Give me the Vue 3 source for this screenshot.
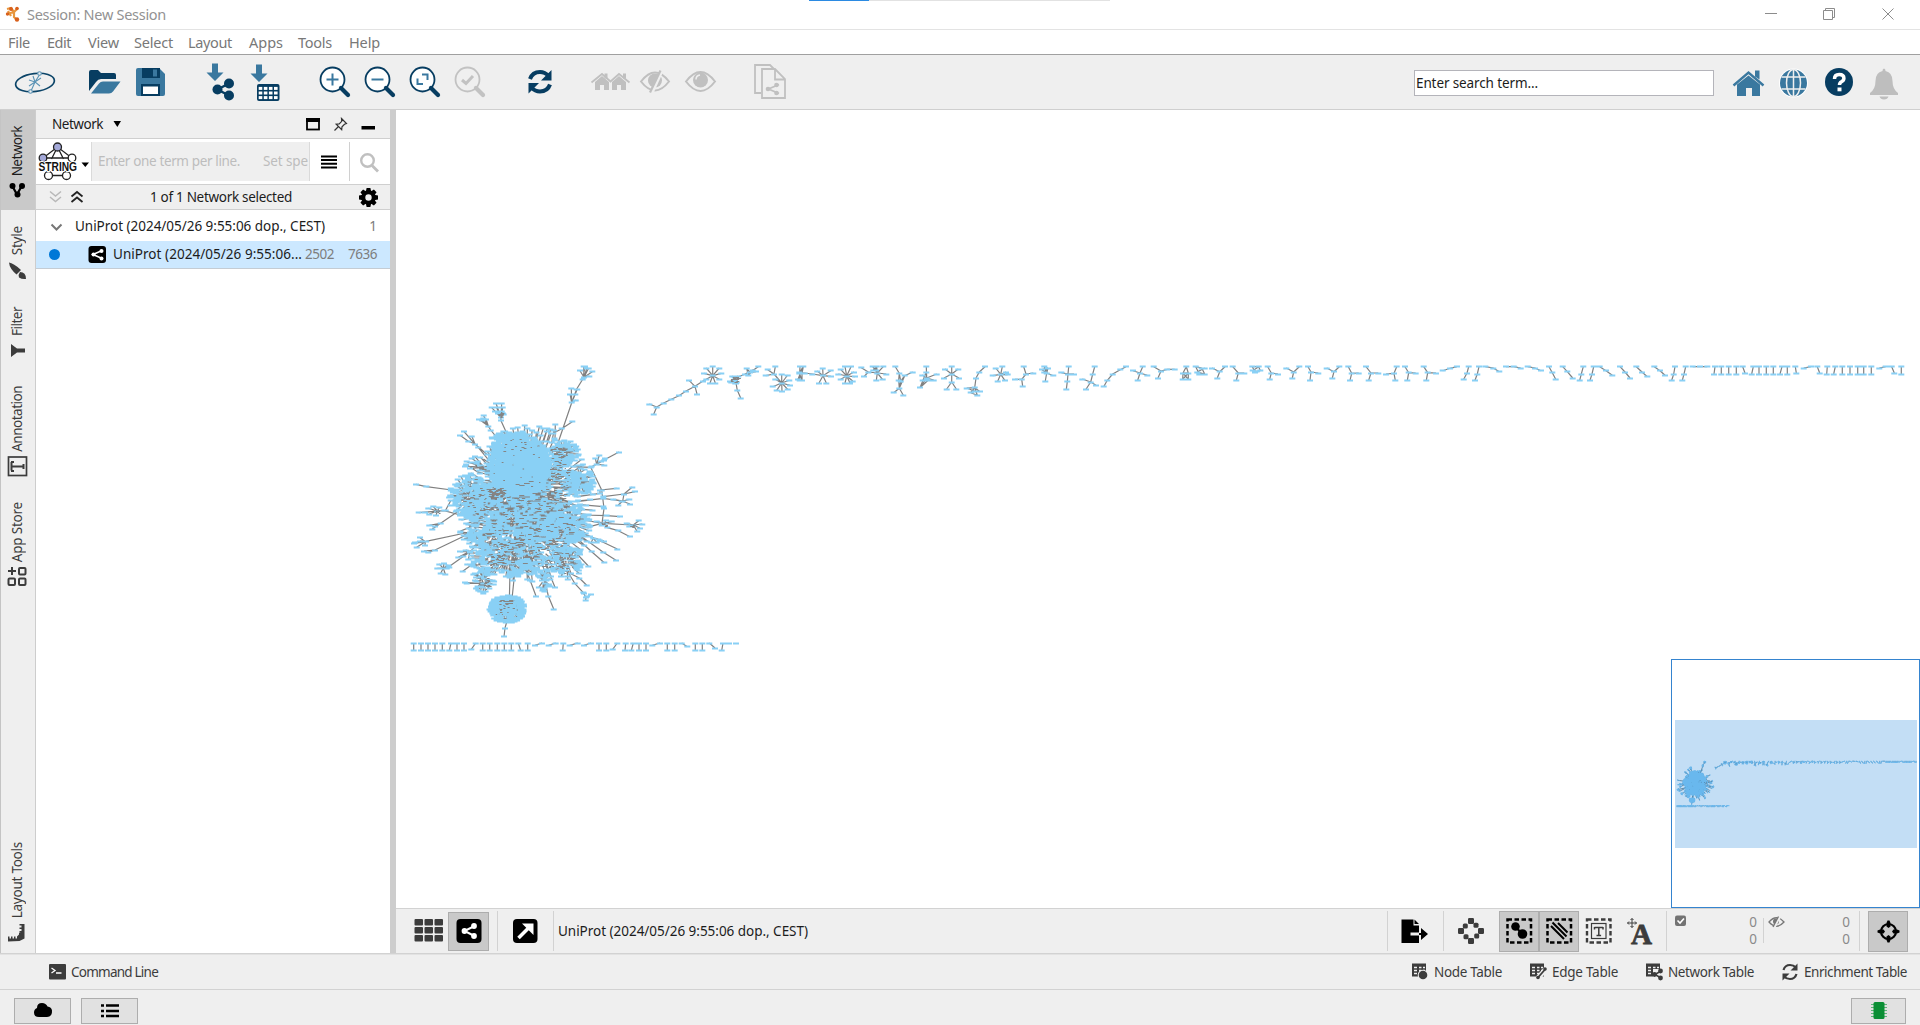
<script setup>
import { h } from 'vue'

/* Icon cell: b = [x, y, width, height] of the part of the window it draws */
const Cell = (p, { slots }) =>
  h('svg', { width: p.b[2], height: p.b[3], viewBox: p.b.join(' '), fill: 'none' }, slots.default())
Cell.props = ['b']

/* Spreads the letters of a label over the given length */
const vFit = {
  mounted(el, { value, arg }) {
    const len = arg === 'v' ? el.offsetHeight : el.getBoundingClientRect().width
    el.style.letterSpacing = ((value - len) / el.textContent.length).toFixed(3) + 'px'
  },
}

const menus = [['File', 22, 8], ['Edit', 24, 17], ['View', 31, 17], ['Select', 39, 15], ['Layout', 44, 15], ['Apps', 34, 17], ['Tools', 34, 15], ['Help', 31, 17]]
const tables = [['node', 'Node Table', 68], ['edge', 'Edge Table', 66], ['net', 'Network Table', 86], ['ref', 'Enrichment Table', 103]]

/* ---- network drawing ---- */
const edges = []
const nodes = []
const parse = (s) => s.trim().split(/\s+/).map((q) => q.split(',').map(Number))
function draw(text, ox, oy) {
  text.trim().split('\n').forEach((line) => {
    const t = line.trim()
    const pts = parse(t.slice(1)).map(([x, y]) => [ox + x / 3, oy + y / 3])
    if (t[0] === 'P') edges.push(...pts.slice(1).map((q, i) => [...pts[i], ...q]))
    else edges.push(...pts.slice(1).map((q) => [...pts[0], ...q]))
    nodes.push(...pts)
  })
}
function bars(list, ox, oy, top, bottom) {
  list.trim().split(' ').forEach((s) => {
    const [a, b] = s.split('/').map(Number)
    draw(`P ${a},${top} ${b || a},${bottom}`, ox, oy)
  })
}

draw(`P 58,162 80,171 101,159 124,148 147,137 168,123 195,109 219,93 248,77
S 80,171 71,193
S 195,109 177,91 201,132
S 248,77 229,54 248,50 268,54 222,70 274,70 229,88 268,88 240,99 256,99
S 314,90 307,78 325,78 300,95 316,99
P 307,78 320,97 325,78 304,97 314,82 318,99 322,121 332,144
P 360,67 385,50
S 360,67 368,60 350,55 345,72 378,65 355,77 325,80
P 350,55 355,77 368,60 345,72
S 432,72 413,59 436,50 407,77 455,99
S 455,99 455,73 473,75 436,88 478,91 428,110 480,106 440,121 456,125 473,118
P 510,50 509,70 509,90
P 520,50 516,70 516,90 508,70 519,50 504,88
P 508,68 524,69 547,72 579,77
S 579,77 578,54 602,62 562,63 603,79 567,99 589,99
S 650,78 645,50 663,50 632,58 672,66 625,72 675,80 632,88 668,93 645,99 660,99
S 742,69 728,50 740,50 760,50 769,72 758,89 739,92 715,66
P 728,50 738,60 740,50 730,60
S 715,66 694,53 702,80
P 796,50 808,70 812,93 808,115 820,136
P 848,66 824,77 812,93
P 808,70 806,90 808,115 791,128
P 824,77 808,115
S 890,84 889,50 889,66 877,75 920,72 911,90 878,90 870,113
P 889,66 870,113 895,90
S 965,72 965,50 945,57 985,57 942,84 987,84 965,96
S 965,96 950,117 979,117
P 1065,50 1048,66 1038,84 1034,113 1042,136
S 1034,113 1010,114 1050,125 1022,128
P 1010,114 1034,124 1022,128 1042,136
S 1112,73 1117,50 1097,54 1128,66 1088,77 1133,74 1103,94 1125,92
S 1188,72 1181,50 1210,69 1175,88
S 1175,88 1155,88 1178,109
S 1250,69 1236,59 1243,50 1254,54 1270,77 1246,93
P 1236,59 1254,54 1243,66
S 1314,72 1316,50 1294,68 1332,72 1312,95
P 1312,95 1309,118`, 630, 350)
draw(`S 32,96 7,87 48,106 18,118 38,72
P 38,72 44,50
P 138,50 121,59 98,72 82,91 71,110
S 180,69 188,50 159,62 202,76 173,91
S 243,63 221,50 262,58 234,84
P 262,58 284,58
P 319,50 309,69 325,69 319,50
P 325,69 308,88 309,69 325,88 325,69
P 347,50 365,54 374,72 358,72 347,50
P 374,54 352,66 374,72
S 419,65 396,54 435,50 412,84
S 475,69 458,50 493,69 469,91
P 517,50 536,50 541,62 525,66 517,50
P 536,50 518,62 530,64
S 574,69 563,50 594,72 569,88
S 641,66 619,54 658,50 637,84
S 693,66 684,50 715,69 690,91
S 762,65 740,54 778,50 757,84
S 815,70 805,50 836,69 810,91
S 873,69 858,50 895,69 866,91
S 942,70 950,50 918,72 946,91
S 986,68 975,50 1007,69 982,91
S 1043,68 1031,50 1068,69 1039,91
P 1088,62 1110,55 1131,50
P 1166,50 1161,69 1151,88
P 1197,50 1192,72 1185,91
P 1216,50 1240,54 1258,65`, 1080, 350)
draw(`P 18,50 41,50 62,54
P 83,50 105,54 123,62
P 147,50 157,68 167,88
P 188,50 202,65 218,84
P 250,50 244,72 239,91
P 281,50 276,72 270,91
P 299,50 318,62 337,76
P 360,50 375,66 390,84
P 409,50 426,66 442,80
P 463,50 480,62 495,76
P 525,50 521,72 515,91
P 557,50 552,72 547,91
P 578,50 600,50 622,50
P 728,50 735,69
P 886,50 889,69
P 911,54 933,50
P 952,50 959,69
P 1138,54 1157,50
P 1175,50 1183,69`, 1500, 350)
bars('645/642 664 686 709 760/755 777 799 820 846/840 862 982/980 1006/1001 1027 1050 1073 1091 1114 1204', 1500, 350, 50, 72)
bars('41 63 84 105 127 153/148 171 192 248 269 292 313 334 355/362 383 490/488 597 619 677/675 700/694 717 738 802 824 886 907 969/965', 400, 620, 69, 92)
draw(`P 214,88 227,69
P 405,76 426,69
P 446,76 467,69
P 509,76 533,69
P 552,76 573,69
P 638,88 652,69
P 757,76 780,69
P 845,69 862,80
P 928,69 945,84
P 987,69
P 1008,69
P 322,0 315,24 312,50`, 400, 620)
draw(`P 470,290 515,158 530,117 548,88 555,50
S 552,82 540,62 560,55 577,65 551,50 566,54 568,78 548,88
S 515,158 527,150 510,132 526,132 514,115 532,117
P 325,260 303,212 302,185
S 303,203 288,160 305,160 275,173 290,173 308,173 285,184 305,185 297,188 309,190
P 303,203 294,190 311,192 303,203
P 300,275 272,240 250,205
S 265,228 251,197 237,208 258,207 247,212
P 262,314 225,282 192,245
P 225,282 205,274 180,256
P 225,282 215,258
P 460,250 485,236 517,215
P 465,270 466,223
P 372,260 374,226
P 408,275 418,230
P 418,275 430,234
P 428,275 442,236
P 440,275 452,238
P 455,278 462,242
P 155,420 79,410 48,403
S 112,483 85,475 100,470 118,473 56,488 88,492 133,482 108,497 75,487
P 133,482 180,495
P 137,480 152,452
P 180,480 122,520 97,537
P 122,520 88,526
P 122,520 105,528
P 210,546 78,574 45,578
S 76,575 60,563 42,580 50,592 75,586 60,573
P 210,550 105,600 72,603
P 105,600 85,607
P 262,605 235,630 188,664
P 235,580 210,605 140,655
S 210,604 180,605 175,622 190,618 205,628 222,602 197,600
S 130,655 118,642 132,640 112,655 148,653 122,670 136,672 145,645
P 520,350 572,352 612,330 657,306
S 590,343 598,315 615,325 603,335 613,345 575,350 586,325
P 572,352 605,420 612,475 606,520
P 530,440 600,430 600,420 650,415
P 530,455 610,445 665,453 690,462
S 668,453 672,432 655,465 688,448 640,448
P 610,440 672,432 697,411
P 672,432 705,425
P 540,464 610,470
P 550,495 620,497 660,500
P 550,510 610,520 695,525
S 700,525 716,512 727,522 720,535 712,545 680,520 688,528
S 614,520 590,515 635,515 622,533 605,525 618,510
P 622,533 655,542 690,560
P 540,520 570,530 605,520
P 540,545 600,572 652,597
P 530,550 610,607 648,631
P 520,555 575,605 613,638
S 580,565 570,560 595,567 573,578 590,577 612,573
P 520,600 565,648
P 490,660 538,684 560,706
P 500,660 524,700 552,730
S 558,743 550,728 573,733 557,750 561,738
P 370,640 390,690 408,738
P 430,670 445,738 461,777
P 435,640 465,712
P 345,660 335,755
P 330,665 328,755
S 252,352 215,325 225,320 200,335 195,348 210,355 230,340 240,345 238,360
S 250,700 200,700 235,720 250,730 268,715 243,680 195,698 225,690`, 400, 350)

/* dense parts: seeded noise keeps the layout identical on every load */
let seed = 20240526
const rnd = () => {
  seed = (Math.imul(seed, 1664525) + 1013904223) >>> 0
  return seed / 4294967296
}
function blob(cx, cy, rx, ry, count, spoke) {
  for (let i = 0; i < count; i++) {
    const a = rnd() * Math.PI * 2
    const r = Math.sqrt(rnd())
    const x = 400 + (cx + Math.cos(a) * rx * r) / 3
    const y = 350 + (cy + Math.sin(a) * ry * r) / 3
    nodes.push([x, y])
    if (rnd() < spoke) {
      const tx = 400 + cx / 3
      const ty = 350 + cy / 3
      const k = Math.min(0.7, 10 / (Math.hypot(tx - x, ty - y) + 1))
      edges.push([x, y, x + (tx - x) * k, y + (ty - y) * k])
    }
  }
}
/* long edges inside the hub, drawn below the nodes */
for (let i = 0; i < 200; i++) {
  const a = rnd() * 6.283
  const r = 0.5 + rnd() * 0.45
  edges.push([521, 485, 400 + (370 + Math.cos(a) * 185 * r) / 3, 350 + (465 + Math.sin(a) * 215 * r) / 3])
}
blob(358, 345, 90, 98, 1250, 0.2)
blob(385, 440, 155, 145, 520, 0.7)
blob(370, 550, 170, 105, 300, 0.9)
blob(350, 490, 145, 105, 240, 0.3)
blob(210, 440, 63, 68, 180, 0.7)
blob(492, 310, 45, 44, 75, 0.8)
blob(535, 392, 48, 46, 85, 0.8)
blob(505, 520, 64, 60, 95, 0.9)
blob(500, 635, 50, 54, 70, 1)
blob(325, 620, 118, 66, 115, 1)
blob(432, 690, 24, 36, 26, 1)
blob(250, 690, 34, 38, 34, 1)
blob(232, 648, 38, 24, 16, 1)
blob(375, 655, 38, 27, 30, 1)
blob(330, 282, 64, 40, 110, 0.6)
blob(235, 550, 55, 30, 34, 1)
blob(322, 777, 50, 41, 235, 0.4)
for (let i = 0; i < 34; i++) {
  const a = (i / 34) * 6.283
  draw(`P 322,777 ${322 + Math.cos(a) * (48 + rnd() * 6)},${777 + Math.sin(a) * (38 + rnd() * 6)}`, 400, 350)
}
/* loose nodes that fray the outline of the hub */
for (let i = 0; i < 90; i++) {
  const a = (i / 90) * 6.283
  const r = 0.97 + rnd() * 0.17
  draw(`P ${375 + Math.cos(a) * 160},${465 + Math.sin(a) * 178} ${375 + Math.cos(a) * 185 * r},${465 + Math.sin(a) * 205 * r}`, 400, 350)
}
/* short edge fragments that stay visible between packed nodes */
const specks = []
function speck(cx, cy, rx, ry, count, len) {
  for (let i = 0; i < count; i++) {
    const a = rnd() * 6.283
    const r = Math.sqrt(rnd())
    const x = 400 + (cx + Math.cos(a) * rx * r) / 3
    const y = Math.round(350 + (cy + Math.sin(a) * ry * r) / 3) + 0.5
    specks.push(`M${x.toFixed(1)} ${y}h${(1 + rnd() * len).toFixed(1)}`)
  }
}
speck(375, 500, 150, 110, 140, 5)
speck(360, 360, 85, 85, 8, 1)
speck(240, 440, 55, 60, 40, 3)
speck(283, 422, 26, 12, 34, 4)
speck(475, 385, 32, 55, 46, 4)
speck(475, 312, 28, 26, 26, 4)
speck(400, 610, 125, 50, 70, 4)
speck(285, 630, 28, 22, 28, 3)
speck(262, 700, 12, 18, 14, 2)
speck(495, 640, 26, 28, 22, 3)
speck(340, 290, 40, 30, 14, 2)
speck(318, 755, 26, 7, 16, 4)
speck(322, 785, 42, 28, 16, 2)
speck(302, 196, 8, 9, 14, 2)
speck(112, 484, 6, 8, 8, 1)
speck(245, 352, 10, 8, 12, 2)
speck(612, 522, 8, 8, 10, 2)
speck(696, 526, 6, 6, 6, 2)
speck(1003, 88, 12, 9, 22, 3)
const edgePath = edges.map((e) => `M${e[0].toFixed(1)} ${e[1].toFixed(1)}L${e[2].toFixed(1)} ${e[3].toFixed(1)}`).join('')
const nodePath = nodes.map(([x, y]) => `M${(x - 3).toFixed(1)} ${(Math.round(y - 0.5) + 0.5).toFixed(1)}h6`).join('')
const speckPath = specks.join('')
const grid = [0, 1, 2, 3, 4, 5, 6, 7, 8]
const ring = (n) => Array.from({ length: n }, (_, i) => (i * 360) / n)
</script>

<template>
  <div class="window">
    <header class="title">
      <Cell :b="[0, 0, 27, 29]">
        <path d="M7 9l4-1 3 4 4-4M7 14l7-2v5l3 3M8 11l3 5" stroke="#e8963c" stroke-width="2.2" />
        <g fill="#d8601c"><circle cx="11" cy="9" r="2" /><circle cx="17" cy="8.500" r="1.800" /><circle cx="17" cy="19.500" r="2.200" /><circle cx="7.500" cy="14" r="1.700" /></g>
      </Cell>
      <span v-fit="139" class="t-title">Session: New Session</span>
      <i class="loading"><b></b></i>
      <Cell :b="[1755, 0, 165, 29]" class="push">
        <g stroke="#8c8c8c"><path d="M1765 13.500h12M1823.500 10.500h9v9h-9zM1825.500 10v-1.500h9v9h-2M1882.500 8.500l11 11M1893.500 8.500l-11 11" /></g>
      </Cell>
    </header>

    <nav class="menu">
      <div v-for="m in menus" :key="m[0]" class="m" :style="{ paddingLeft: m[2] + 'px', width: m[1] + m[2] + 'px' }"><span v-fit="m[1]">{{ m[0] }}</span></div>
    </nav>

    <div class="tools">
      <Cell :b="[0, 55, 80, 54]">
        <g stroke="#0b4468" stroke-width="1.700"><ellipse cx="35" cy="82.500" rx="19.500" ry="9" transform="rotate(-7 35 82.500)" /></g>
        <g stroke="#5a93b5" stroke-width="1.100"><path d="M31 91l4-9 5-8M29 80l6 2 6-4M33 76l2 6 5 4M35 82l-6 4" /><circle cx="30.500" cy="91.500" r="1.800" fill="#efefef" /><circle cx="39.500" cy="73.500" r="1.800" fill="#efefef" /></g>
      </Cell>
      <Cell :b="[80, 55, 48, 54]">
        <path d="M89 91V72q0-2 2-2h7l3 3h13q2 0 2 2v4h-15q-3 0-5 3z" fill="#073d61" />
        <path d="M91 93.500l8-10q1.500-2 4-2h17.500l-7.500 10q-1.500 2-4 2z" fill="#3a789f" />
      </Cell>
      <Cell :b="[128, 55, 62, 54]">
        <path d="M136 70q0-2 2-2h21l6 6v20q0 2-2 2h-25q-2 0-2-2z" fill="#3a789f" />
        <path d="M142 68h18v10h-18zM141 84h19v12h-19z" fill="#073d61" /><path d="M153 69.500h4v7h-4z" fill="#3a789f" /><path d="M143 86.500h15v7.500h-15z" fill="#fff" />
      </Cell>
      <Cell :b="[190, 55, 55, 54]">
        <path d="M212 63.500h6v9h5.500l-8.500 8.500-8.500-8.500h5.500z" fill="#3a789f" />
        <path d="M229 83.500l-11.500 6 11.500 6" stroke="#073d61" stroke-width="2.500" /><g fill="#073d61"><circle cx="217.500" cy="89.500" r="5" /><circle cx="229" cy="83.500" r="5" /><circle cx="229" cy="95.500" r="5" /></g>
      </Cell>
      <Cell :b="[245, 55, 65, 54]">
        <path d="M256 64.500h6v9h5.500L259 82l-8.500-8.500h5.500z" fill="#3a789f" />
        <rect x="257" y="84" width="22.500" height="17" rx="2" fill="#073d61" />
        <g fill="#fff"><template v-for="c in 4" :key="c"><rect v-for="r in 3" :key="r" :x="253.600 + c * 5.100" :y="82.300 + r * 4.600" width="3.600" height="3" /></template></g>
      </Cell>
      <Cell v-for="k in 4" :key="k" :b="[310 + (k - 1) * 45, 55, 45, 54]">
        <g :transform="`translate(${(k - 1) * 45})`">
          <g :stroke="k === 4 ? '#c2c2c2' : '#073d61'"><circle cx="332.500" cy="79.500" r="12" stroke-width="1.800" :fill="k === 4 ? '#efefef' : '#fff'" /><path d="M341 88l7 7" stroke-width="4.200" stroke-linecap="round" /></g>
          <path v-if="k === 1" d="M326.500 79.500h12M332.500 73.500v12" stroke="#3a789f" stroke-width="2" />
          <path v-if="k === 2" d="M326.500 79.500h12" stroke="#3a789f" stroke-width="2" />
          <path v-if="k === 3" d="M332 74.500h5.500v5.500M327.500 78.500v5.500h5.500" stroke="#3a789f" stroke-width="2" />
          <path v-if="k === 4" d="M327 80l4 3.500 7-7.500" stroke="#c2c2c2" stroke-width="3" />
        </g>
      </Cell>
      <Cell :b="[490, 55, 90, 54]">
        <g stroke="#073d61" stroke-width="4"><path d="M530 79q2.500-7 10-7 5 0 8.500 4M550 84.500q-2.500 7-10 7-5 0-8.500-4" /></g><path d="M551.500 70v10.500h-10.500zM528.500 93.500V83h10.500z" fill="#073d61" />
      </Cell>
      <Cell :b="[580, 55, 55, 54]">
        <g fill="#c0c0c0"><path d="M595 82l7-6 7 6v8h-5v-5h-4v5h-5zM612 82l7-6 7 6v8h-5v-5h-4v5h-5z" /><path d="M604.500 73.500h3v5h-3zM623 73.500h3v5h-3z" /></g>
        <path d="M591.500 82.500l10.500-8.500 8.500 7.500 8.500-7.500 10.500 8.500" stroke="#c0c0c0" stroke-width="1.800" />
      </Cell>
      <Cell :b="[635, 55, 45, 54]">
        <path d="M641 81.500q14-18 28 0-14 18-28 0z" stroke="#c0c0c0" stroke-width="2" /><circle cx="655" cy="80.500" r="7" fill="#c0c0c0" /><path d="M662 71l-10 22" stroke="#efefef" stroke-width="3" /><path d="M660.500 70.500l-10.500 22" stroke="#c0c0c0" stroke-width="2.200" />
      </Cell>
      <Cell :b="[680, 55, 60, 54]">
        <path d="M686 81.500q14.500-19 29 0-14.500 19-29 0z" stroke="#c0c0c0" stroke-width="2" /><circle cx="700.500" cy="80" r="7.500" fill="#c0c0c0" /><path d="M696 79.500q0-4 4-4.500" stroke="#efefef" stroke-width="1.500" />
      </Cell>
      <Cell :b="[740, 55, 60, 54]">
        <g stroke="#c0c0c0" stroke-width="1.800"><path d="M761 93h-6V65h15l4 4M762 69h13l10 10v19h-23zM775 69v10.500h10M779 84.500l-10.500 4.500 10.500 4.500" /></g><g fill="#c0c0c0"><circle cx="776.500" cy="85" r="2.300" /><circle cx="768" cy="89" r="2.300" /><circle cx="776.500" cy="93" r="2.300" /></g>
      </Cell>
      <div class="find"><span v-fit="122">Enter search term...</span></div>
      <Cell :b="[1715, 55, 57, 54]">
        <path d="M1737 84.500l11.500-9 11.500 9V96h-8v-8h-6v8h-9zM1755 70.500h4.500v9l-4.500-3z" fill="#3a789f" /><path d="M1733.500 85.500l15-13 15 13" stroke="#3a789f" stroke-width="2.400" />
      </Cell>
      <Cell :b="[1772, 55, 44, 54]">
        <circle cx="1793.500" cy="83" r="14.500" fill="#fff" /><circle cx="1793.500" cy="83" r="13.500" fill="#3a789f" /><g stroke="#efefef" stroke-width="1.500"><ellipse cx="1793.500" cy="83" rx="7" ry="13.500" /><path d="M1793.500 69v28M1781.500 77h24M1781.500 89h24" /></g>
      </Cell>
      <Cell :b="[1816, 55, 45, 54]">
        <circle cx="1839" cy="82" r="14" fill="#073d61" /><path d="M1834.500 79q0-4.500 4.700-4.500t4.700 3.800q0 2.200-2.400 3.400-2 1-2 3.300" stroke="#fff" stroke-width="3.500" /><path d="M1837.500 87.500h4v3.800h-4z" fill="#fff" />
      </Cell>
      <Cell :b="[1861, 55, 59, 54]">
        <path d="M1884 68.500q1.500 0 1.500 2.500 7 1.500 7 10 0 8 5.500 12v2h-28v-2q5.500-4 5.500-12 0-8.500 7-10 0-2.500 1.500-2.500zM1879.500 96.500h9q-1 3-4.500 3t-4.500-3z" fill="#bebebe" />
      </Cell>
    </div>

    <main class="work">
      <aside class="rail">
        <div class="tab on"><span v-fit:v="50">Network</span>
          <Cell :b="[7, 183, 21, 15]"><path d="M12 185.500l5 9 5-9" stroke="#000" stroke-width="2.200" /><g fill="#000"><circle cx="12.500" cy="186" r="3" /><circle cx="22" cy="186" r="3" /><circle cx="17.500" cy="194.500" r="3" /></g></Cell></div>
        <div class="tab style"><span v-fit:v="29">Style</span>
          <Cell :b="[7, 261, 21, 18]"><path d="M9 261.500q4.500 .5 12 7.500l-4.500 4.500q-7-6-7.500-12zM20 271q6 0 6 7-4 .5-7-1.500-1-3 1-5.500z" fill="#3c3c3c" /></Cell></div>
        <div class="tab filter"><span v-fit:v="29">Filter</span>
          <Cell :b="[7, 343, 21, 15]"><path d="M11 344v13l6-4.500h8v-4h-8z" fill="#3c3c3c" /></Cell></div>
        <div class="tab anno"><span v-fit:v="66">Annotation</span>
          <Cell :b="[7, 457, 21, 21]"><rect x="8.500" y="458" width="18" height="18.500" stroke="#3c3c3c" stroke-width="1.700" /><path d="M11.500 463v8.500M11.500 467.500h12M23.500 465v5M11 463h3M11 472h3" stroke="#3c3c3c" stroke-width="2" /></Cell></div>
        <div class="tab store"><span v-fit:v="60">App Store</span>
          <Cell :b="[7, 567, 21, 21]"><g stroke="#3c3c3c" stroke-width="2"><rect x="8.500" y="579.500" width="6.500" height="6.500" rx="1" /><rect x="19" y="579.500" width="6.500" height="6.500" rx="1" /><rect x="19" y="569" width="6.500" height="6.500" rx="1" /><path d="M8 572h8M12 568v8" /></g></Cell></div>
        <div class="tab layout"><span v-fit:v="76">Layout Tools</span>
          <Cell :b="[7, 924, 21, 18]"><path d="M8 941.500v-5h1.500v2h1.500v-2h1.500v2h1.500v-2h1.500v2h1.500v-2l2-2v-2h1.500l-1.500-1.500h2.500v-2h-2v-1.500h2v-2h-2v-1.500h5v14.500l-5 2.500z" fill="#3c3c3c" /></Cell></div>
      </aside>

      <section class="panel">
        <div class="p-head">
          <span v-fit="51">Network</span>
          <Cell :b="[103, 110, 20, 28]"><path d="M113.500 121h7.500l-3.700 6z" fill="#000" /></Cell>
          <Cell :b="[300, 110, 90, 28]" class="push">
            <rect x="307" y="119" width="12" height="10.500" stroke="#000" stroke-width="1.800" /><path d="M306 118h14v4h-14zM361.500 126h13.500v3.500h-13.500z" fill="#000" />
            <path d="M341.500 118.500l5 5-2 .8-2.500 2.500-.3 2.800-5.500-5.500 3-.3 2.500-2.500zM338.500 126.500l-4 4" stroke="#333" stroke-width="1.200" />
          </Cell>
        </div>
        <div class="p-search">
          <Cell :b="[36, 139, 55, 45]">
            <g stroke="#222" stroke-width="1.300"><path d="M57.500 147l-14.500 11h29zM57.500 147l-6 12M57.500 147l6 12M48.500 175.500h18" /><circle cx="57.500" cy="147" r="4" fill="#a3a8d8" /><circle cx="43" cy="158" r="3.800" fill="#a3a8d8" /><g fill="#fff"><circle cx="72" cy="158" r="3.800" /><circle cx="48.500" cy="175.500" r="4" /><circle cx="66.500" cy="175.500" r="4" /></g></g>
            <text x="38.500" y="171" textLength="38.500" lengthAdjust="spacingAndGlyphs" class="logo">STRING</text>
            <path d="M81.500 162.500h7.500l-3.700 4.500z" fill="#000" />
          </Cell>
          <div class="p-input"><span v-fit="142">Enter one term per line.</span><span v-fit="45" class="spe">Set spe</span></div>
          <Cell :b="[310, 139, 80, 45]">
            <path d="M321 156.500h16M321 160h16M321 163.800h16M321 167.500h16" stroke="#000" stroke-width="2" /><path d="M349.500 142v39" stroke="#d0d0d0" />
            <circle cx="367.500" cy="160.500" r="6.300" stroke="#c0c0c0" stroke-width="2.400" /><path d="M372 165.500l6 6" stroke="#c0c0c0" stroke-width="2.800" />
          </Cell>
        </div>
        <div class="p-count">
          <Cell :b="[36, 185, 115, 24]">
            <path d="M50 191.500l5.500 4.500 5.500-4.500M50 197l5.500 4.500 5.500-4.500" stroke="#b8b8b8" stroke-width="1.500" /><path d="M71.500 196.500l5.500-4.500 5.500 4.500M71.500 202l5.500-4.500 5.500 4.500" stroke="#222" stroke-width="1.800" />
          </Cell>
          <span v-fit="142">1 of 1 Network selected</span>
          <Cell :b="[350, 185, 40, 24]" class="push">
            <circle cx="368.500" cy="197.500" r="5.200" stroke="#000" stroke-width="4" /><path v-for="a in ring(8)" :key="a" d="M366.600 188h3.800l.8 4h-5.400z" fill="#000" :transform="`rotate(${a} 368.500 197.500)`" />
          </Cell>
        </div>
        <div class="p-row">
          <Cell :b="[36, 210, 40, 31]"><path d="M51.500 224.500l5 5 5-5" stroke="#777" stroke-width="2" /></Cell>
          <span v-fit="250">UniProt (2024/05/26 9:55:06 dop., CEST)</span><span class="num push">1</span>
        </div>
        <div class="p-row sel">
          <Cell :b="[36, 241, 77, 27]"><circle cx="54.500" cy="254.500" r="5.500" fill="#0078d7" /><rect x="88.500" y="246" width="17.500" height="17" rx="3" fill="#000" /><path d="M101 251l-8 3.500 8 3.500" stroke="#fff" stroke-width="1.600" /><g fill="#fff"><circle cx="101.500" cy="251" r="2" /><circle cx="93.500" cy="254.500" r="2" /><circle cx="101.500" cy="258.500" r="2" /></g></Cell>
          <span v-fit="189">UniProt (2024/05/26 9:55:06...</span><span v-fit="29" class="num a">2502</span><span v-fit="29" class="num b">7636</span>
        </div>
      </section>

      <i class="split"></i>

      <section class="view">
        <div class="canvas">
          <svg width="1524" height="798" viewBox="396 110 1524 798" fill="none">
            <path :d="edgePath" stroke="#808080" stroke-width="1.200" />
            <path :d="nodePath" stroke="#89d0f5" stroke-width="2.100" />
            <path :d="speckPath" stroke="#858585" stroke-width="1.200" />
          </svg>
          <div class="mini">
            <svg width="242" height="128" viewBox="401 110 1506 797" fill="none">
              <path :d="edgePath" stroke="#4a7796" stroke-width="5" />
              <path :d="nodePath" stroke="#69b8ee" stroke-width="7" />
            </svg>
          </div>
        </div>
        <div class="v-bar">
          <Cell :b="[396, 909, 52, 44]"><rect v-for="i in grid" :key="i" :x="414.500 + (i % 3) * 10" :y="919 + Math.floor(i / 3) * 8" width="8.500" height="6.500" rx="1" fill="#3c3c3c" /></Cell>
          <div class="btn"><Cell :b="[449, 912, 39, 38]"><rect x="456.500" y="919" width="25" height="24" rx="4" fill="#000" /><path d="M474.500 926l-10 5 10 5" stroke="#fff" stroke-width="2" /><g fill="#fff"><circle cx="474" cy="926" r="2.900" /><circle cx="464.500" cy="931" r="2.900" /><circle cx="474" cy="936" r="2.900" /></g></Cell></div>
          <Cell :b="[489, 909, 69, 44]"><path d="M497.500 911v40M553.500 911v40" stroke="#d2d2d2" /><rect x="513" y="919" width="24.500" height="24" rx="4" fill="#000" /><path d="M518.500 938l11-11" stroke="#fff" stroke-width="3.600" /><path d="M522 923.500h11.500V935z" fill="#fff" /></Cell>
          <span v-fit="250">UniProt (2024/05/26 9:55:06 dop., CEST)</span>
          <Cell :b="[1380, 909, 119, 44]" class="push">
            <path d="M1387.500 911v40M1443.500 911v40" stroke="#d2d2d2" />
            <path d="M1401.500 919.500h12v6h5.500v17.500h-17.500zM1414.500 919.500l4.500 4.500h-4.500zM1421 928l7 6-7 6z" fill="#000" /><path d="M1410.500 934h9" stroke="#efefef" stroke-width="3" /><path d="M1419 934h5" stroke="#000" stroke-width="2" />
            <g fill="#3c3c3c"><rect v-for="a in ring(4)" :key="a" x="1468" y="918" width="6" height="6" rx="1.200" :transform="`rotate(${a} 1471 931)`" /><rect v-for="a in ring(4)" :key="'d' + a" x="1473.500" y="922.800" width="5" height="5" rx="1.500" :transform="`rotate(${a} 1471 931)`" /></g>
          </Cell>
          <div class="btn tall"><Cell :b="[1500, 912, 38, 38]"><rect x="1507.500" y="919.500" width="23.500" height="23" stroke="#000" stroke-width="2.500" stroke-dasharray="4.500 2.500" /><circle cx="1515.500" cy="926.500" r="4.300" fill="#000" /><circle cx="1522.500" cy="934" r="4.800" fill="#000" /><path d="M1515 926l7 8" stroke="#000" stroke-width="2" /></Cell></div>
          <div class="btn tall"><Cell :b="[1540, 912, 38, 38]"><rect x="1547.500" y="919.500" width="23.500" height="23" stroke="#000" stroke-width="2.500" stroke-dasharray="4.500 2.500" /><path d="M1551 926l13 13M1552.500 922.500l14 14M1558 923l9.500 9.500" stroke="#000" stroke-width="2" /></Cell></div>
          <Cell :b="[1579, 909, 89, 44]">
            <rect x="1587" y="919.500" width="23.500" height="23" stroke="#3c3c3c" stroke-width="2.400" stroke-dasharray="4.500 2.500" /><rect x="1591.500" y="923.500" width="14.500" height="15" stroke="#3c3c3c" stroke-width="1.200" /><path d="M1594.500 927.500h8.500M1598.800 927.500v8M1596.500 935.500h4.600M1594.500 927v2.500M1603 927v2.500" stroke="#3c3c3c" stroke-width="1.500" />
            <text x="1631" y="944" textLength="21" lengthAdjust="spacingAndGlyphs" class="big-a">A</text><path d="M1632 918.500v9M1627.500 923h9M1630.500 920l1.500-1.500 1.500 1.500M1630.500 926l1.500 1.500 1.500-1.500M1629 921.500l-1.500 1.500 1.500 1.500M1635 921.500l1.500 1.500-1.500 1.500" stroke="#3c3c3c" />
            <path d="M1666.500 911v40" stroke="#d2d2d2" />
          </Cell>
          <Cell :b="[1668, 909, 20, 44]"><rect x="1675" y="915.500" width="11" height="10.500" rx="2" fill="#737373" /><path d="M1677.500 920.500l2.500 2.500 4-4.500" stroke="#fff" stroke-width="1.600" /></Cell>
          <div class="cnt"><span>0</span><span>0</span></div>
          <Cell :b="[1758, 909, 30, 44]"><path d="M1763.500 918v25" stroke="#d2d2d2" /><path d="M1769 922q7.500-8.500 15 0-7.500 8.500-15 0z" stroke="#777" stroke-width="1.300" /><circle cx="1776" cy="921.500" r="3" fill="#777" /><path d="M1779.500 917l-5 10" stroke="#efefef" stroke-width="2.500" /><path d="M1778.500 916.500l-5.500 10.500" stroke="#777" stroke-width="1.300" /></Cell>
          <div class="cnt c2"><span>0</span><span>0</span></div>
          <Cell :b="[1850, 909, 18, 44]"><path d="M1859.500 911v40" stroke="#d2d2d2" /></Cell>
          <div class="btn tall last"><Cell :b="[1869, 912, 38, 38]"><circle cx="1888.500" cy="931.500" r="7.500" stroke="#000" stroke-width="2.200" /><path v-for="a in ring(4)" :key="a" d="M1886.500 926.500v-3.500l1-2.500h2l1 2.500v3.500l-2 1.500z" fill="#000" :transform="`rotate(${a} 1888.500 931.500)`" /></Cell></div>
        </div>
      </section>
    </main>

    <div class="docks">
      <Cell :b="[0, 955, 71, 34]"><rect x="49" y="964" width="17" height="15.500" rx="1" fill="#3c3c3c" /><path d="M51.500 968l3.500 2.500-3.500 2.500M56 973h5.500" stroke="#fff" stroke-width="1.300" /></Cell>
      <span v-fit="87">Command Line</span>
      <div class="docks-r push">
        <div v-for="t in tables" :key="t[0]" class="dock">
          <Cell :b="[0, 0, 24, 34]">
            <template v-if="t[0] !== 'ref'"><path d="M2 8.500h14v13H2z" fill="#3c3c3c" /><path d="M4 12.500h3M9 12.500h2.500M13 12.500h2M4 15.500h3M9 15.500h2.500M13 15.500h2M4 18.500h3M9 18.500h2.500" stroke="#efefef" stroke-width="1.700" /></template>
            <g v-if="t[0] === 'node'"><circle cx="13" cy="20" r="5.300" fill="#efefef" /><circle cx="13" cy="20" r="4.300" fill="#3c3c3c" /></g>
            <g v-if="t[0] === 'edge'"><path d="M10 23l8-9" stroke="#efefef" stroke-width="5" /><path d="M10 22.500l7-8" stroke="#3c3c3c" stroke-width="1.800" /><circle cx="17" cy="14" r="1.800" fill="#3c3c3c" /><circle cx="10" cy="22.500" r="1.800" fill="#3c3c3c" /></g>
            <g v-if="t[0] === 'net'"><path d="M9 14h10v11H9z" fill="#efefef" /><path d="M17 16l-6 3.500 6 3.500" stroke="#3c3c3c" stroke-width="1.500" /><g fill="#3c3c3c"><circle cx="16.500" cy="16" r="2.400" /><circle cx="10.500" cy="19.500" r="2.400" /><circle cx="16.500" cy="23" r="2.400" /></g></g>
            <g v-if="t[0] === 'ref'"><path d="M3.500 15q1.500-5 6.500-5 3.500 0 6 2.500M16.500 19q-1.500 5-6.500 5-3.500 0-6-2.500" stroke="#3c3c3c" stroke-width="2.200" /><path d="M17.500 8.500v7h-7zM2.500 25.500v-7h7z" fill="#3c3c3c" /></g>
          </Cell>
          <span v-fit="t[2]">{{ t[1] }}</span>
        </div>
      </div>
    </div>

    <footer class="status">
      <div class="sbtn"><Cell :b="[15, 999, 55, 24]"><path d="M39 1017q-5 0-5-4.500 0-3.500 3-4.500 0-5 5-5 4 0 5.500 3.500 4 .5 4.500 4 .5 6.500-5 6.500z" fill="#000" /></Cell></div>
      <div class="sbtn"><Cell :b="[82, 999, 55, 24]"><path d="M101 1005.500h3M101 1011h3M101 1016h3M106 1005.500h13M106 1011h13M106 1016h13" stroke="#000" stroke-width="2.700" /></Cell></div>
      <div class="sbtn push right"><Cell :b="[1851, 999, 53, 24]"><path d="M1870 1004.500h16M1870 1007.500h16M1870 1010.500h16M1870 1013.500h16M1870 1016.500h16" stroke="#5fb378" stroke-width="1.200" /><rect x="1872.500" y="1002" width="11" height="17" rx="1.500" fill="#0b8f35" /></Cell></div>
    </footer>
  </div>
</template>

<style>
body { background: #fff; overflow: hidden; }
</style>

<style scoped>
.window { width: 1920px; height: 1025px; display: flex; flex-direction: column; overflow: hidden; background: #efefef; color: #1c1c1c; font: 13.5px/16px "Noto Sans", "Open Sans", sans-serif; box-sizing: border-box; }
.window * { box-sizing: border-box; }
.window span { white-space: pre; flex: none; }
.window svg { display: block; flex: none; }
.push { margin-left: auto; }
.title { height: 30px; background: #fff; border-bottom: 1px solid #e3e3e3; display: flex; align-items: center; position: relative; flex: none; }
.t-title { font-size: 14.5px; color: #929292; padding-bottom: 1px; }
.loading { position: absolute; left: 809px; top: 0; width: 301px; height: 1px; background: #e2e2e2; }
.loading b { display: block; width: 60px; height: 1px; background: #2b8ae2; }
.menu { height: 25px; background: #fff; border-bottom: 1px solid #a0a0a0; display: flex; align-items: center; flex: none; padding-bottom: 1px; font-size: 14.5px; color: #787878; }
.m { flex: none; }
.tools { height: 55px; border-bottom: 1px solid #cfcfcf; display: flex; flex: none; }
.find { width: 300px; height: 26px; margin: 15px 1px 0 auto; background: #fff; border: 1.500px solid #b4b4ba; display: flex; align-items: center; padding: 0 0 1px 1px; flex: none; }
.work { height: 844px; display: flex; flex: none; border-bottom: 1px solid #d2d2d2; }
.rail { width: 36px; border-left: 1px solid #c4c4c4; border-right: 1px solid #cdcdcd; display: flex; flex-direction: column; flex: none; color: #3c3c3c; }
.tab { display: flex; flex-direction: column; align-items: center; width: 34px; flex: none; padding-right: 2px; }
.tab span { writing-mode: vertical-rl; transform: rotate(180deg); line-height: 18px; }
.tab svg { margin-top: 7px; }
.tab.on { height: 100px; background: #c9c9c9; padding-top: 16px; color: #1c1c1c; }
.style { margin-top: 16px; }
.filter { margin-top: 27px; }
.anno { margin-top: 28px; }
.store { margin-top: 25px; }
.layout { margin-top: 255px; }
.tab.anno svg, .tab.store svg { margin-top: 4px; }
.tab.layout svg { margin-top: 5px; }
.panel { width: 354px; background: #fff; flex: none; }
.panel span { margin-left: -1px; }
.p-head { height: 29px; background: #efefef; border-bottom: 1px solid #cfcfcf; display: flex; align-items: center; padding-left: 17px; }
.p-search { height: 46px; border-bottom: 1px solid #cfcfcf; display: flex; }
.logo { font: bold 12px "Liberation Sans", sans-serif; fill: #111; stroke: #fff; stroke-width: 2px; paint-order: stroke; }
.big-a { font: bold 29px "Liberation Serif", serif; fill: #3c3c3c; stroke: #3c3c3c; stroke-width: 0.8px; }
.p-input { width: 219px; height: 39px; margin-top: 3px; background: #efefef; border: 1px solid #dadada; border-width: 0 1px; display: flex; align-items: center; padding: 0 0 2px 7px; color: #bdbdbd; overflow: hidden; }
.panel .spe { margin-left: 23px; }
.p-count { height: 25px; background: #efefef; border-bottom: 1px solid #cfcfcf; display: flex; align-items: center; }
.p-row { height: 31px; display: flex; align-items: center; padding-right: 13px; }
.p-row.sel { height: 28px; background: #cce8ff; border-bottom: 1px solid #c4ccd4; padding-bottom: 1px; }
.p-row.sel span:first-of-type { margin-left: 0; }
.num { color: #7d7d7d; }
.panel .num.push { margin-left: auto; }
.panel .num.a { margin-left: 3px; }
.panel .num.b { margin-left: 14px; }
.split { width: 6px; background: #cdcdcd; flex: none; }
.view { width: 1524px; display: flex; flex-direction: column; flex: none; }
.canvas { height: 798px; background: #fff; position: relative; flex: none; }
.mini { position: absolute; right: 0; bottom: 0; width: 249px; height: 249px; border: 1.500px solid #3584cf; background: #fff; display: flex; align-items: center; padding-left: 3px; }
.mini svg { background: #c3def5; }
.v-bar { height: 45px; border-top: 1px solid #d2d2d2; display: flex; align-items: center; padding-right: 12px; flex: none; }
.btn { width: 41px; height: 39px; background: #c9c9c9; border: 1px solid #adadad; display: flex; flex: none; overflow: hidden; justify-content: center; align-items: center; }
.btn.tall { width: 40px; height: 41px; }
.cnt { width: 70px; color: #8a8a8a; text-align: right; line-height: 17px; display: flex; flex-direction: column; padding-right: 1px; }
.cnt.c2 { width: 62px; padding-right: 0; }
.docks { height: 36px; border-top: 1px solid #e2e2e2; border-bottom: 1px solid #d2d2d2; display: flex; align-items: center; flex: none; color: #3c3c3c; }
.docks-r { display: flex; gap: 26px; padding-right: 13px; }
.dock { display: flex; align-items: center; }
.status { flex: 1; display: flex; padding: 8px 14px 0; gap: 10px; }
.sbtn { width: 57px; height: 26px; background: #e1e1e1; border: 1px solid #adadad; display: flex; flex: none; }
.sbtn.right { width: 55px; }
</style>
